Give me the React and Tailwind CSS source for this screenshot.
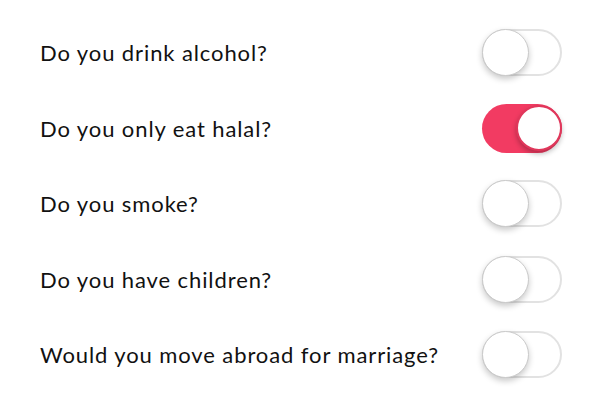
const questions = [
  { label: "Do you drink alcohol?", on: false },
  { label: "Do you only eat halal?", on: true },
  { label: "Do you smoke?", on: false },
  { label: "Do you have children?", on: false },
  { label: "Would you move abroad for marriage?", on: false },
];

function Toggle({ on }) {
  if (on) {
    return (
      <div className="relative flex h-[49px] w-[80px] items-center justify-end rounded-full bg-[#f23b62]">
        <div className="h-[46px] w-[46px] rounded-full border-2 border-[#e0375b] bg-white shadow-[0_3px_5px_rgba(0,0,0,0.25)]" />
      </div>
    );
  }
  return (
    <div className="relative flex h-[47px] w-[80px] items-center rounded-full border-2 border-[#e2e2e2] bg-white">
      <div className="-ml-[2px] h-[47px] w-[47px] rounded-full border border-[#cacaca] bg-white shadow-[0_3px_6px_rgba(0,0,0,0.22)]" />
    </div>
  );
}

export default function App() {
  return (
    <div className="h-[401px] w-[600px] overflow-hidden bg-white pt-[15px] font-['Lato',sans-serif] text-[#111]">
      {questions.map((q) => (
        <div key={q.label} className="flex h-[75.5px] items-center justify-between pl-[40px] pr-[38px]">
          <span className="text-[22px] tracking-[0.9px]">{q.label}</span>
          <Toggle on={q.on} />
        </div>
      ))}
    </div>
  );
}
